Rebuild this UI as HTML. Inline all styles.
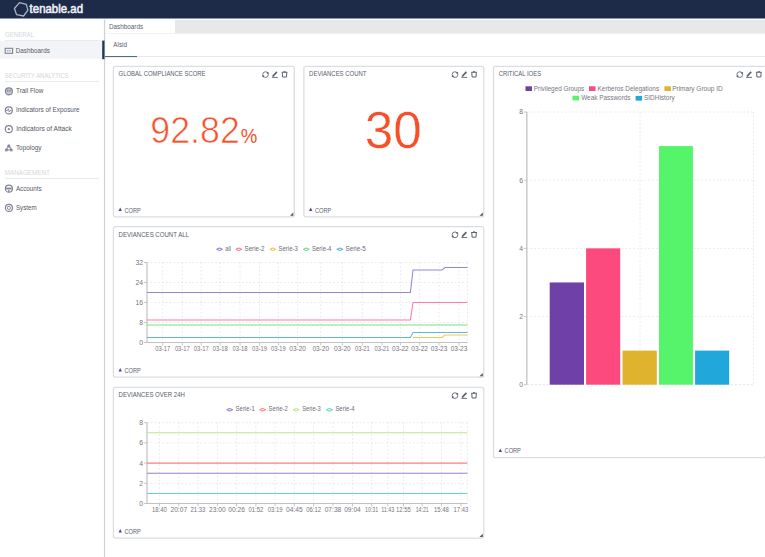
<!DOCTYPE html>
<html><head><meta charset="utf-8"><title>Dashboards</title>
<style>
html,body{margin:0;padding:0;background:#fff;width:765px;height:557px;overflow:hidden;}
svg{display:block;font-family:"Liberation Sans", sans-serif;}
</style></head>
<body>
<svg width="765" height="557" viewBox="0 0 765 557">
<rect x="0" y="0" width="765" height="18.5" fill="#1d2a48"/>
<polygon points="19.5,2.6 26.3,4.4 27.9,10.2 23.6,16 16.6,14.7 14.4,8.5" fill="none" stroke="#a9b3c6" stroke-width="1.3" stroke-linejoin="round"/>
<text x="29.6" y="13.1" font-size="11.9" fill="#eef0f5" text-anchor="start" font-weight="normal" textLength="53.4" lengthAdjust="spacingAndGlyphs" stroke="#eef0f5" stroke-width="0.55">tenable.ad</text>
<rect x="103.9" y="19.6" width="1.25" height="540" fill="#d2d2d4"/>
<text x="5" y="36.8" font-size="6.9" fill="#d6d6dc" text-anchor="start" font-weight="normal" textLength="29" lengthAdjust="spacingAndGlyphs">GENERAL</text>
<rect x="5" y="40" width="95" height="0.8" fill="#e6e6ea"/>
<rect x="0" y="41" width="102.5" height="17.8" fill="#f3f4f7"/>
<rect x="102.2" y="40.6" width="2.3" height="18.6" fill="#1c3a52"/>
<rect x="5.2" y="48.3" width="7.4" height="5" fill="none" stroke="#7f8393" stroke-width="1.1"/>
<rect x="7" y="50.3" width="1.5" height="1" fill="#7f8393"/><rect x="9.3" y="50.3" width="1.5" height="1" fill="#7f8393"/>
<text x="15.8" y="52.8" font-size="7.35" fill="#555866" text-anchor="start" font-weight="normal" textLength="34" lengthAdjust="spacingAndGlyphs">Dashboards</text>
<text x="4.8" y="78" font-size="6.9" fill="#d6d6dc" text-anchor="start" font-weight="normal" textLength="64" lengthAdjust="spacingAndGlyphs">SECURITY ANALYTICS</text>
<rect x="5" y="81" width="94" height="0.8" fill="#e6e6ea"/>
<circle cx="8.9" cy="91.3" r="3.5" fill="none" stroke="#7f8393" stroke-width="1.2"/><circle cx="8.9" cy="91.3" r="3" fill="#7f8393" opacity="0.45"/><rect x="7.2" y="89.6" width="1.2" height="2" fill="#7f8393"/><rect x="9.4" y="89.6" width="1.2" height="2" fill="#7f8393"/>
<text x="16" y="93.3" font-size="7.35" fill="#555866" text-anchor="start" font-weight="normal" textLength="27.3" lengthAdjust="spacingAndGlyphs">Trail Flow</text>
<circle cx="8.8" cy="110.4" r="3.5" fill="none" stroke="#7f8393" stroke-width="1.2"/><polyline points="6,110.6 7.5,110.6 8.3,108.8 9.3,112 10,110.6 11.6,110.6" fill="none" stroke="#7f8393" stroke-width="0.9"/>
<text x="16" y="112" font-size="7.35" fill="#555866" text-anchor="start" font-weight="normal" textLength="63.6" lengthAdjust="spacingAndGlyphs">Indicators of Exposure</text>
<circle cx="8.8" cy="129.2" r="3.5" fill="none" stroke="#7f8393" stroke-width="1.2"/><circle cx="8.8" cy="129.2" r="1.1" fill="#7f8393"/>
<text x="16.2" y="130.9" font-size="7.35" fill="#555866" text-anchor="start" font-weight="normal" textLength="55.6" lengthAdjust="spacingAndGlyphs">Indicators of Attack</text>
<polygon points="8.8,145.6 11.4,149.9 6.2,149.9" fill="none" stroke="#7f8393" stroke-width="1.3" stroke-linejoin="round" opacity="0.8"/>
<g opacity="0.8"><circle cx="8.8" cy="145.8" r="1.6" fill="#7f8393"/><circle cx="6.3" cy="150" r="1.6" fill="#7f8393"/><circle cx="11.3" cy="150" r="1.6" fill="#7f8393"/></g>
<text x="15.9" y="150.2" font-size="7.35" fill="#555866" text-anchor="start" font-weight="normal" textLength="25.6" lengthAdjust="spacingAndGlyphs">Topology</text>
<text x="4.8" y="175" font-size="6.9" fill="#d6d6dc" text-anchor="start" font-weight="normal" textLength="45" lengthAdjust="spacingAndGlyphs">MANAGEMENT</text>
<rect x="5" y="178" width="94" height="0.8" fill="#e6e6ea"/>
<circle cx="8.9" cy="188.7" r="3.5" fill="none" stroke="#7f8393" stroke-width="1.2"/><rect x="6.2" y="187.6" width="5.4" height="1.8" fill="#7f8393"/><circle cx="8.9" cy="190.8" r="0.9" fill="#7f8393"/>
<text x="15.9" y="190.9" font-size="7.35" fill="#555866" text-anchor="start" font-weight="normal" textLength="25.8" lengthAdjust="spacingAndGlyphs">Accounts</text>
<circle cx="8.9" cy="207.9" r="3.5" fill="none" stroke="#7f8393" stroke-width="1.2"/><circle cx="8.9" cy="207.9" r="1.6" fill="none" stroke="#7f8393" stroke-width="0.9"/>
<text x="15.9" y="209.9" font-size="7.35" fill="#555866" text-anchor="start" font-weight="normal" textLength="20.7" lengthAdjust="spacingAndGlyphs">System</text>
<rect x="175" y="19.8" width="590" height="13.6" fill="#e8e8e9"/>
<rect x="105" y="33" width="660" height="0.6" fill="#ececee"/>
<text x="108.9" y="28.8" font-size="6.8" fill="#5d6070" text-anchor="start" font-weight="normal" textLength="34.2" lengthAdjust="spacingAndGlyphs">Dashboards</text>
<text x="113.3" y="46.9" font-size="6.9" fill="#5d6070" text-anchor="start" font-weight="normal" textLength="13.7" lengthAdjust="spacingAndGlyphs">Alsid</text>
<rect x="137" y="56.1" width="628" height="0.8" fill="#e4e4e8"/>
<rect x="105" y="56" width="32" height="1.1" fill="#4f6f86"/>
<rect x="113.4" y="66.4" width="180.9" height="150.4" rx="2" fill="#fff" stroke="#dcdde2" stroke-width="1.3"/>
<text x="118.6" y="76.3" font-size="7.4" fill="#585c6e" text-anchor="start" font-weight="normal" textLength="86.9" lengthAdjust="spacingAndGlyphs">GLOBAL COMPLIANCE SCORE</text>
<circle cx="265.5" cy="74.6" r="2.85" fill="none" stroke="#5d6172" stroke-width="0.95" opacity="0.9"/>
<circle cx="267.8" cy="72.89999999999999" r="0.95" fill="#5d6172"/>
<circle cx="263.2" cy="76.3" r="0.95" fill="#5d6172"/>
<line x1="272.6" y1="76.5" x2="276.9" y2="71.9" stroke="#5d6172" stroke-width="1.7"/>
<rect x="271.9" y="76.9" width="5.8" height="0.9" fill="#5d6172"/>
<rect x="281.6" y="71.8" width="5.9" height="1.0" fill="#5d6172"/>
<rect x="283.5" y="71.2" width="2.1" height="0.8" fill="#5d6172"/>
<path d="M282.3,72.8 L282.6,77.0 L286.5,77.0 L286.8,72.8" fill="none" stroke="#5d6172" stroke-width="1.0"/>
<polygon points="120.2,207.6 121.9,211.1 118.5,211.1" fill="#5b3aa8"/>
<text x="124.5" y="212.5" font-size="6.9" fill="#5d6070" text-anchor="start" font-weight="normal" textLength="16.3" lengthAdjust="spacingAndGlyphs">CORP</text>
<polygon points="293.3,212.5 293.3,215.8 290.0,215.8" fill="#555"/>
<rect x="303.9" y="66.4" width="179.9" height="150.4" rx="2" fill="#fff" stroke="#dcdde2" stroke-width="1.3"/>
<text x="309.1" y="76.3" font-size="7.4" fill="#585c6e" text-anchor="start" font-weight="normal" textLength="57.4" lengthAdjust="spacingAndGlyphs">DEVIANCES COUNT</text>
<circle cx="455.0" cy="74.6" r="2.85" fill="none" stroke="#5d6172" stroke-width="0.95" opacity="0.9"/>
<circle cx="457.3" cy="72.89999999999999" r="0.95" fill="#5d6172"/>
<circle cx="452.7" cy="76.3" r="0.95" fill="#5d6172"/>
<line x1="462.1" y1="76.5" x2="466.4" y2="71.9" stroke="#5d6172" stroke-width="1.7"/>
<rect x="461.4" y="76.9" width="5.8" height="0.9" fill="#5d6172"/>
<rect x="471.1" y="71.8" width="5.9" height="1.0" fill="#5d6172"/>
<rect x="473.0" y="71.2" width="2.1" height="0.8" fill="#5d6172"/>
<path d="M471.8,72.8 L472.1,77.0 L476.0,77.0 L476.3,72.8" fill="none" stroke="#5d6172" stroke-width="1.0"/>
<polygon points="310.7,207.6 312.4,211.1 309.0,211.1" fill="#5b3aa8"/>
<text x="315.0" y="212.5" font-size="6.9" fill="#5d6070" text-anchor="start" font-weight="normal" textLength="16.3" lengthAdjust="spacingAndGlyphs">CORP</text>
<polygon points="482.8,212.5 482.8,215.8 479.5,215.8" fill="#555"/>
<rect x="113.4" y="226.6" width="370.4" height="150.6" rx="2" fill="#fff" stroke="#dcdde2" stroke-width="1.3"/>
<text x="118.6" y="236.5" font-size="7.4" fill="#585c6e" text-anchor="start" font-weight="normal" textLength="70.4" lengthAdjust="spacingAndGlyphs">DEVIANCES COUNT ALL</text>
<circle cx="455.0" cy="234.79999999999998" r="2.85" fill="none" stroke="#5d6172" stroke-width="0.95" opacity="0.9"/>
<circle cx="457.3" cy="233.1" r="0.95" fill="#5d6172"/>
<circle cx="452.7" cy="236.49999999999997" r="0.95" fill="#5d6172"/>
<line x1="462.1" y1="236.7" x2="466.4" y2="232.1" stroke="#5d6172" stroke-width="1.7"/>
<rect x="461.4" y="237.1" width="5.8" height="0.9" fill="#5d6172"/>
<rect x="471.1" y="232.0" width="5.9" height="1.0" fill="#5d6172"/>
<rect x="473.0" y="231.39999999999998" width="2.1" height="0.8" fill="#5d6172"/>
<path d="M471.8,233.0 L472.1,237.2 L476.0,237.2 L476.3,233.0" fill="none" stroke="#5d6172" stroke-width="1.0"/>
<polygon points="120.2,368.0 121.9,371.5 118.5,371.5" fill="#5b3aa8"/>
<text x="124.5" y="372.9" font-size="6.9" fill="#5d6070" text-anchor="start" font-weight="normal" textLength="16.3" lengthAdjust="spacingAndGlyphs">CORP</text>
<polygon points="482.8,372.9 482.8,376.2 479.5,376.2" fill="#555"/>
<rect x="113.4" y="387.4" width="370.4" height="150.69999999999996" rx="2" fill="#fff" stroke="#dcdde2" stroke-width="1.3"/>
<text x="118.6" y="397.3" font-size="7.4" fill="#585c6e" text-anchor="start" font-weight="normal" textLength="66.3" lengthAdjust="spacingAndGlyphs">DEVIANCES OVER 24H</text>
<circle cx="455.0" cy="395.6" r="2.85" fill="none" stroke="#5d6172" stroke-width="0.95" opacity="0.9"/>
<circle cx="457.3" cy="393.90000000000003" r="0.95" fill="#5d6172"/>
<circle cx="452.7" cy="397.3" r="0.95" fill="#5d6172"/>
<line x1="462.1" y1="397.5" x2="466.4" y2="392.9" stroke="#5d6172" stroke-width="1.7"/>
<rect x="461.4" y="397.9" width="5.8" height="0.9" fill="#5d6172"/>
<rect x="471.1" y="392.8" width="5.9" height="1.0" fill="#5d6172"/>
<rect x="473.0" y="392.2" width="2.1" height="0.8" fill="#5d6172"/>
<path d="M471.8,393.8 L472.1,398.0 L476.0,398.0 L476.3,393.8" fill="none" stroke="#5d6172" stroke-width="1.0"/>
<polygon points="120.2,528.9 121.9,532.4 118.5,532.4" fill="#5b3aa8"/>
<text x="124.5" y="533.8" font-size="6.9" fill="#5d6070" text-anchor="start" font-weight="normal" textLength="16.3" lengthAdjust="spacingAndGlyphs">CORP</text>
<polygon points="482.8,533.8 482.8,537.0999999999999 479.5,537.0999999999999" fill="#555"/>
<rect x="493.5" y="66.4" width="281.0999999999999" height="391.2" rx="2" fill="#fff" stroke="#dcdde2" stroke-width="1.3"/>
<text x="498.70000000000005" y="76.3" font-size="7.4" fill="#585c6e" text-anchor="start" font-weight="normal" textLength="42.4" lengthAdjust="spacingAndGlyphs">CRITICAL IOES</text>
<circle cx="739.8" cy="74.6" r="2.85" fill="none" stroke="#5d6172" stroke-width="0.95" opacity="0.9"/>
<circle cx="742.0999999999999" cy="72.89999999999999" r="0.95" fill="#5d6172"/>
<circle cx="737.5" cy="76.3" r="0.95" fill="#5d6172"/>
<line x1="746.9" y1="76.5" x2="751.1999999999999" y2="71.9" stroke="#5d6172" stroke-width="1.7"/>
<rect x="746.1999999999999" y="76.9" width="5.8" height="0.9" fill="#5d6172"/>
<rect x="755.9" y="71.8" width="5.9" height="1.0" fill="#5d6172"/>
<rect x="757.8" y="71.2" width="2.1" height="0.8" fill="#5d6172"/>
<path d="M756.5999999999999,72.8 L756.9,77.0 L760.8,77.0 L761.0999999999999,72.8" fill="none" stroke="#5d6172" stroke-width="1.0"/>
<polygon points="500.3,448.40000000000003 502.0,451.90000000000003 498.6,451.90000000000003" fill="#5b3aa8"/>
<text x="504.6" y="453.3" font-size="6.9" fill="#5d6070" text-anchor="start" font-weight="normal" textLength="16.3" lengthAdjust="spacingAndGlyphs">CORP</text>
<polygon points="767.5999999999999,453.3 767.5999999999999,456.6 764.3,456.6" fill="#555"/>
<text x="150.3" y="143.4" font-size="36.6" fill="#f6502a" text-anchor="start" font-weight="normal" textLength="89.5" lengthAdjust="spacingAndGlyphs" stroke="#fff" stroke-width="0.7">92.82</text>
<text x="240.8" y="143.4" font-size="20" fill="#f6502a" text-anchor="start" font-weight="normal" textLength="16.6" lengthAdjust="spacingAndGlyphs">%</text>
<text x="364.8" y="147.8" font-size="51" fill="#f6502a" text-anchor="start" font-weight="normal" textLength="57" lengthAdjust="spacingAndGlyphs" stroke="#fff" stroke-width="0.4">30</text>
<line x1="147" y1="262.5" x2="467.5" y2="262.5" stroke="#e2e2e2" stroke-width="0.8" stroke-dasharray="1.6,2.2"/>
<line x1="143.8" y1="262.5" x2="147" y2="262.5" stroke="#c2c2c2" stroke-width="0.9"/>
<text x="143" y="264.9" font-size="6.8" fill="#76767e" text-anchor="end" font-weight="normal">32</text>
<line x1="147" y1="282.5" x2="467.5" y2="282.5" stroke="#e2e2e2" stroke-width="0.8" stroke-dasharray="1.6,2.2"/>
<line x1="143.8" y1="282.5" x2="147" y2="282.5" stroke="#c2c2c2" stroke-width="0.9"/>
<text x="143" y="284.9" font-size="6.8" fill="#76767e" text-anchor="end" font-weight="normal">24</text>
<line x1="147" y1="302.5" x2="467.5" y2="302.5" stroke="#e2e2e2" stroke-width="0.8" stroke-dasharray="1.6,2.2"/>
<line x1="143.8" y1="302.5" x2="147" y2="302.5" stroke="#c2c2c2" stroke-width="0.9"/>
<text x="143" y="304.9" font-size="6.8" fill="#76767e" text-anchor="end" font-weight="normal">16</text>
<line x1="147" y1="322.5" x2="467.5" y2="322.5" stroke="#e2e2e2" stroke-width="0.8" stroke-dasharray="1.6,2.2"/>
<line x1="143.8" y1="322.5" x2="147" y2="322.5" stroke="#c2c2c2" stroke-width="0.9"/>
<text x="143" y="324.9" font-size="6.8" fill="#76767e" text-anchor="end" font-weight="normal">8</text>
<line x1="143.8" y1="342.5" x2="147" y2="342.5" stroke="#c2c2c2" stroke-width="0.9"/>
<text x="143" y="344.9" font-size="6.8" fill="#76767e" text-anchor="end" font-weight="normal">0</text>
<line x1="162.7" y1="262.5" x2="162.7" y2="342.5" stroke="#e2e2e2" stroke-width="0.8" stroke-dasharray="1.6,2.2"/>
<line x1="162.7" y1="342.5" x2="162.7" y2="345.5" stroke="#c2c2c2" stroke-width="0.9"/>
<line x1="182.3" y1="262.5" x2="182.3" y2="342.5" stroke="#e2e2e2" stroke-width="0.8" stroke-dasharray="1.6,2.2"/>
<line x1="182.3" y1="342.5" x2="182.3" y2="345.5" stroke="#c2c2c2" stroke-width="0.9"/>
<line x1="201.2" y1="262.5" x2="201.2" y2="342.5" stroke="#e2e2e2" stroke-width="0.8" stroke-dasharray="1.6,2.2"/>
<line x1="201.2" y1="342.5" x2="201.2" y2="345.5" stroke="#c2c2c2" stroke-width="0.9"/>
<line x1="220.2" y1="262.5" x2="220.2" y2="342.5" stroke="#e2e2e2" stroke-width="0.8" stroke-dasharray="1.6,2.2"/>
<line x1="220.2" y1="342.5" x2="220.2" y2="345.5" stroke="#c2c2c2" stroke-width="0.9"/>
<line x1="240" y1="262.5" x2="240" y2="342.5" stroke="#e2e2e2" stroke-width="0.8" stroke-dasharray="1.6,2.2"/>
<line x1="240" y1="342.5" x2="240" y2="345.5" stroke="#c2c2c2" stroke-width="0.9"/>
<line x1="259.5" y1="262.5" x2="259.5" y2="342.5" stroke="#e2e2e2" stroke-width="0.8" stroke-dasharray="1.6,2.2"/>
<line x1="259.5" y1="342.5" x2="259.5" y2="345.5" stroke="#c2c2c2" stroke-width="0.9"/>
<line x1="278.4" y1="262.5" x2="278.4" y2="342.5" stroke="#e2e2e2" stroke-width="0.8" stroke-dasharray="1.6,2.2"/>
<line x1="278.4" y1="342.5" x2="278.4" y2="345.5" stroke="#c2c2c2" stroke-width="0.9"/>
<line x1="297.6" y1="262.5" x2="297.6" y2="342.5" stroke="#e2e2e2" stroke-width="0.8" stroke-dasharray="1.6,2.2"/>
<line x1="297.6" y1="342.5" x2="297.6" y2="345.5" stroke="#c2c2c2" stroke-width="0.9"/>
<line x1="320.7" y1="262.5" x2="320.7" y2="342.5" stroke="#e2e2e2" stroke-width="0.8" stroke-dasharray="1.6,2.2"/>
<line x1="320.7" y1="342.5" x2="320.7" y2="345.5" stroke="#c2c2c2" stroke-width="0.9"/>
<line x1="342.4" y1="262.5" x2="342.4" y2="342.5" stroke="#e2e2e2" stroke-width="0.8" stroke-dasharray="1.6,2.2"/>
<line x1="342.4" y1="342.5" x2="342.4" y2="345.5" stroke="#c2c2c2" stroke-width="0.9"/>
<line x1="362.4" y1="262.5" x2="362.4" y2="342.5" stroke="#e2e2e2" stroke-width="0.8" stroke-dasharray="1.6,2.2"/>
<line x1="362.4" y1="342.5" x2="362.4" y2="345.5" stroke="#c2c2c2" stroke-width="0.9"/>
<line x1="381.9" y1="262.5" x2="381.9" y2="342.5" stroke="#e2e2e2" stroke-width="0.8" stroke-dasharray="1.6,2.2"/>
<line x1="381.9" y1="342.5" x2="381.9" y2="345.5" stroke="#c2c2c2" stroke-width="0.9"/>
<line x1="400.4" y1="262.5" x2="400.4" y2="342.5" stroke="#e2e2e2" stroke-width="0.8" stroke-dasharray="1.6,2.2"/>
<line x1="400.4" y1="342.5" x2="400.4" y2="345.5" stroke="#c2c2c2" stroke-width="0.9"/>
<line x1="419.6" y1="262.5" x2="419.6" y2="342.5" stroke="#e2e2e2" stroke-width="0.8" stroke-dasharray="1.6,2.2"/>
<line x1="419.6" y1="342.5" x2="419.6" y2="345.5" stroke="#c2c2c2" stroke-width="0.9"/>
<line x1="439" y1="262.5" x2="439" y2="342.5" stroke="#e2e2e2" stroke-width="0.8" stroke-dasharray="1.6,2.2"/>
<line x1="439" y1="342.5" x2="439" y2="345.5" stroke="#c2c2c2" stroke-width="0.9"/>
<line x1="459" y1="262.5" x2="459" y2="342.5" stroke="#e2e2e2" stroke-width="0.8" stroke-dasharray="1.6,2.2"/>
<line x1="459" y1="342.5" x2="459" y2="345.5" stroke="#c2c2c2" stroke-width="0.9"/>
<line x1="467.5" y1="262.5" x2="467.5" y2="342.5" stroke="#e2e2e2" stroke-width="0.8" stroke-dasharray="1.6,2.2"/>
<line x1="147" y1="262.0" x2="147" y2="343.0" stroke="#c2c2c2" stroke-width="1.2"/>
<line x1="147" y1="342.5" x2="467.5" y2="342.5" stroke="#c2c2c2" stroke-width="1.1"/>
<text x="162.7" y="350.6" font-size="7.0" fill="#76767e" text-anchor="middle" font-weight="normal" textLength="14.85" lengthAdjust="spacingAndGlyphs">03-17</text>
<text x="182.3" y="350.6" font-size="7.0" fill="#76767e" text-anchor="middle" font-weight="normal" textLength="14.85" lengthAdjust="spacingAndGlyphs">03-17</text>
<text x="201.2" y="350.6" font-size="7.0" fill="#76767e" text-anchor="middle" font-weight="normal" textLength="14.85" lengthAdjust="spacingAndGlyphs">03-17</text>
<text x="220.2" y="350.6" font-size="7.0" fill="#76767e" text-anchor="middle" font-weight="normal" textLength="14.85" lengthAdjust="spacingAndGlyphs">03-18</text>
<text x="240" y="350.6" font-size="7.0" fill="#76767e" text-anchor="middle" font-weight="normal" textLength="14.85" lengthAdjust="spacingAndGlyphs">03-18</text>
<text x="259.5" y="350.6" font-size="7.0" fill="#76767e" text-anchor="middle" font-weight="normal" textLength="14.85" lengthAdjust="spacingAndGlyphs">03-19</text>
<text x="278.4" y="350.6" font-size="7.0" fill="#76767e" text-anchor="middle" font-weight="normal" textLength="14.85" lengthAdjust="spacingAndGlyphs">03-19</text>
<text x="297.6" y="350.6" font-size="7.0" fill="#76767e" text-anchor="middle" font-weight="normal" textLength="16.6" lengthAdjust="spacingAndGlyphs">03-20</text>
<text x="320.7" y="350.6" font-size="7.0" fill="#76767e" text-anchor="middle" font-weight="normal" textLength="16.6" lengthAdjust="spacingAndGlyphs">03-20</text>
<text x="342.4" y="350.6" font-size="7.0" fill="#76767e" text-anchor="middle" font-weight="normal" textLength="16.6" lengthAdjust="spacingAndGlyphs">03-20</text>
<text x="362.4" y="350.6" font-size="7.0" fill="#76767e" text-anchor="middle" font-weight="normal" textLength="14.85" lengthAdjust="spacingAndGlyphs">03-21</text>
<text x="381.9" y="350.6" font-size="7.0" fill="#76767e" text-anchor="middle" font-weight="normal" textLength="14.85" lengthAdjust="spacingAndGlyphs">03-21</text>
<text x="400.4" y="350.6" font-size="7.0" fill="#76767e" text-anchor="middle" font-weight="normal" textLength="16.6" lengthAdjust="spacingAndGlyphs">03-22</text>
<text x="419.6" y="350.6" font-size="7.0" fill="#76767e" text-anchor="middle" font-weight="normal" textLength="16.6" lengthAdjust="spacingAndGlyphs">03-22</text>
<text x="439" y="350.6" font-size="7.0" fill="#76767e" text-anchor="middle" font-weight="normal" textLength="16.6" lengthAdjust="spacingAndGlyphs">03-23</text>
<text x="459" y="350.6" font-size="7.0" fill="#76767e" text-anchor="middle" font-weight="normal" textLength="16.6" lengthAdjust="spacingAndGlyphs">03-23</text>
<polyline points="147,325.0 467.5,325.0" fill="none" stroke="#74e48c" stroke-width="1.05"/>
<polyline points="413,337.5 442,337.5 445,335.0 467.5,335.0" fill="none" stroke="#f5c35e" stroke-width="1.05"/>
<polyline points="147,337.5 410.4,337.5 413,332.5 467.5,332.5" fill="none" stroke="#5cbad6" stroke-width="1.05"/>
<polyline points="147,320.0 410.4,320.0 413,302.5 467.5,302.5" fill="none" stroke="#ff7aa8" stroke-width="1.05"/>
<polyline points="147,292.5 410.4,292.5 413,270.0 442,270.0 445,267.5 467.5,267.5" fill="none" stroke="#9585d6" stroke-width="1.05"/>
<line x1="216.3" y1="249.3" x2="222.9" y2="249.3" stroke="#9585d6" stroke-width="1.2"/>
<ellipse cx="219.5" cy="249.3" rx="1.9" ry="1.15" fill="#fff" stroke="#9585d6" stroke-width="1.1"/>
<text x="225.2" y="250.9" font-size="7" fill="#6c6c78" text-anchor="start" font-weight="normal" textLength="5.8" lengthAdjust="spacingAndGlyphs">all</text>
<line x1="235.6" y1="249.3" x2="242.2" y2="249.3" stroke="#ff7aa8" stroke-width="1.2"/>
<ellipse cx="238.79999999999998" cy="249.3" rx="1.9" ry="1.15" fill="#fff" stroke="#ff7aa8" stroke-width="1.1"/>
<text x="244.5" y="250.9" font-size="7" fill="#6c6c78" text-anchor="start" font-weight="normal" textLength="20" lengthAdjust="spacingAndGlyphs">Serie-2</text>
<line x1="269.6" y1="249.3" x2="276.20000000000005" y2="249.3" stroke="#f5c35e" stroke-width="1.2"/>
<ellipse cx="272.8" cy="249.3" rx="1.9" ry="1.15" fill="#fff" stroke="#f5c35e" stroke-width="1.1"/>
<text x="278.5" y="250.9" font-size="7" fill="#6c6c78" text-anchor="start" font-weight="normal" textLength="19.4" lengthAdjust="spacingAndGlyphs">Serie-3</text>
<line x1="303.1" y1="249.3" x2="309.70000000000005" y2="249.3" stroke="#74e48c" stroke-width="1.2"/>
<ellipse cx="306.3" cy="249.3" rx="1.9" ry="1.15" fill="#fff" stroke="#74e48c" stroke-width="1.1"/>
<text x="312" y="250.9" font-size="7" fill="#6c6c78" text-anchor="start" font-weight="normal" textLength="19.3" lengthAdjust="spacingAndGlyphs">Serie-4</text>
<line x1="336.6" y1="249.3" x2="343.20000000000005" y2="249.3" stroke="#5cbad6" stroke-width="1.2"/>
<ellipse cx="339.8" cy="249.3" rx="1.9" ry="1.15" fill="#fff" stroke="#5cbad6" stroke-width="1.1"/>
<text x="345.5" y="250.9" font-size="7" fill="#6c6c78" text-anchor="start" font-weight="normal" textLength="20.4" lengthAdjust="spacingAndGlyphs">Serie-5</text>
<line x1="147" y1="422.7" x2="467.3" y2="422.7" stroke="#e2e2e2" stroke-width="0.8" stroke-dasharray="1.6,2.2"/>
<line x1="143.8" y1="422.7" x2="147" y2="422.7" stroke="#c2c2c2" stroke-width="0.9"/>
<text x="143" y="425.09999999999997" font-size="6.8" fill="#76767e" text-anchor="end" font-weight="normal">8</text>
<line x1="147" y1="442.9" x2="467.3" y2="442.9" stroke="#e2e2e2" stroke-width="0.8" stroke-dasharray="1.6,2.2"/>
<line x1="143.8" y1="442.9" x2="147" y2="442.9" stroke="#c2c2c2" stroke-width="0.9"/>
<text x="143" y="445.29999999999995" font-size="6.8" fill="#76767e" text-anchor="end" font-weight="normal">6</text>
<line x1="147" y1="463.1" x2="467.3" y2="463.1" stroke="#e2e2e2" stroke-width="0.8" stroke-dasharray="1.6,2.2"/>
<line x1="143.8" y1="463.1" x2="147" y2="463.1" stroke="#c2c2c2" stroke-width="0.9"/>
<text x="143" y="465.5" font-size="6.8" fill="#76767e" text-anchor="end" font-weight="normal">4</text>
<line x1="147" y1="483.3" x2="467.3" y2="483.3" stroke="#e2e2e2" stroke-width="0.8" stroke-dasharray="1.6,2.2"/>
<line x1="143.8" y1="483.3" x2="147" y2="483.3" stroke="#c2c2c2" stroke-width="0.9"/>
<text x="143" y="485.7" font-size="6.8" fill="#76767e" text-anchor="end" font-weight="normal">2</text>
<line x1="143.8" y1="503.5" x2="147" y2="503.5" stroke="#c2c2c2" stroke-width="0.9"/>
<text x="143" y="505.9" font-size="6.8" fill="#76767e" text-anchor="end" font-weight="normal">0</text>
<line x1="159.4" y1="422.7" x2="159.4" y2="503.5" stroke="#e2e2e2" stroke-width="0.8" stroke-dasharray="1.6,2.2"/>
<line x1="159.4" y1="503.5" x2="159.4" y2="506.5" stroke="#c2c2c2" stroke-width="0.9"/>
<line x1="178.8" y1="422.7" x2="178.8" y2="503.5" stroke="#e2e2e2" stroke-width="0.8" stroke-dasharray="1.6,2.2"/>
<line x1="178.8" y1="503.5" x2="178.8" y2="506.5" stroke="#c2c2c2" stroke-width="0.9"/>
<line x1="198" y1="422.7" x2="198" y2="503.5" stroke="#e2e2e2" stroke-width="0.8" stroke-dasharray="1.6,2.2"/>
<line x1="198" y1="503.5" x2="198" y2="506.5" stroke="#c2c2c2" stroke-width="0.9"/>
<line x1="217.4" y1="422.7" x2="217.4" y2="503.5" stroke="#e2e2e2" stroke-width="0.8" stroke-dasharray="1.6,2.2"/>
<line x1="217.4" y1="503.5" x2="217.4" y2="506.5" stroke="#c2c2c2" stroke-width="0.9"/>
<line x1="236.6" y1="422.7" x2="236.6" y2="503.5" stroke="#e2e2e2" stroke-width="0.8" stroke-dasharray="1.6,2.2"/>
<line x1="236.6" y1="503.5" x2="236.6" y2="506.5" stroke="#c2c2c2" stroke-width="0.9"/>
<line x1="255.9" y1="422.7" x2="255.9" y2="503.5" stroke="#e2e2e2" stroke-width="0.8" stroke-dasharray="1.6,2.2"/>
<line x1="255.9" y1="503.5" x2="255.9" y2="506.5" stroke="#c2c2c2" stroke-width="0.9"/>
<line x1="275.1" y1="422.7" x2="275.1" y2="503.5" stroke="#e2e2e2" stroke-width="0.8" stroke-dasharray="1.6,2.2"/>
<line x1="275.1" y1="503.5" x2="275.1" y2="506.5" stroke="#c2c2c2" stroke-width="0.9"/>
<line x1="294.3" y1="422.7" x2="294.3" y2="503.5" stroke="#e2e2e2" stroke-width="0.8" stroke-dasharray="1.6,2.2"/>
<line x1="294.3" y1="503.5" x2="294.3" y2="506.5" stroke="#c2c2c2" stroke-width="0.9"/>
<line x1="313.6" y1="422.7" x2="313.6" y2="503.5" stroke="#e2e2e2" stroke-width="0.8" stroke-dasharray="1.6,2.2"/>
<line x1="313.6" y1="503.5" x2="313.6" y2="506.5" stroke="#c2c2c2" stroke-width="0.9"/>
<line x1="333" y1="422.7" x2="333" y2="503.5" stroke="#e2e2e2" stroke-width="0.8" stroke-dasharray="1.6,2.2"/>
<line x1="333" y1="503.5" x2="333" y2="506.5" stroke="#c2c2c2" stroke-width="0.9"/>
<line x1="352.5" y1="422.7" x2="352.5" y2="503.5" stroke="#e2e2e2" stroke-width="0.8" stroke-dasharray="1.6,2.2"/>
<line x1="352.5" y1="503.5" x2="352.5" y2="506.5" stroke="#c2c2c2" stroke-width="0.9"/>
<line x1="371.6" y1="422.7" x2="371.6" y2="503.5" stroke="#e2e2e2" stroke-width="0.8" stroke-dasharray="1.6,2.2"/>
<line x1="371.6" y1="503.5" x2="371.6" y2="506.5" stroke="#c2c2c2" stroke-width="0.9"/>
<line x1="387.8" y1="422.7" x2="387.8" y2="503.5" stroke="#e2e2e2" stroke-width="0.8" stroke-dasharray="1.6,2.2"/>
<line x1="387.8" y1="503.5" x2="387.8" y2="506.5" stroke="#c2c2c2" stroke-width="0.9"/>
<line x1="403.5" y1="422.7" x2="403.5" y2="503.5" stroke="#e2e2e2" stroke-width="0.8" stroke-dasharray="1.6,2.2"/>
<line x1="403.5" y1="503.5" x2="403.5" y2="506.5" stroke="#c2c2c2" stroke-width="0.9"/>
<line x1="422.2" y1="422.7" x2="422.2" y2="503.5" stroke="#e2e2e2" stroke-width="0.8" stroke-dasharray="1.6,2.2"/>
<line x1="422.2" y1="503.5" x2="422.2" y2="506.5" stroke="#c2c2c2" stroke-width="0.9"/>
<line x1="441.5" y1="422.7" x2="441.5" y2="503.5" stroke="#e2e2e2" stroke-width="0.8" stroke-dasharray="1.6,2.2"/>
<line x1="441.5" y1="503.5" x2="441.5" y2="506.5" stroke="#c2c2c2" stroke-width="0.9"/>
<line x1="461" y1="422.7" x2="461" y2="503.5" stroke="#e2e2e2" stroke-width="0.8" stroke-dasharray="1.6,2.2"/>
<line x1="461" y1="503.5" x2="461" y2="506.5" stroke="#c2c2c2" stroke-width="0.9"/>
<line x1="467.3" y1="422.7" x2="467.3" y2="503.5" stroke="#e2e2e2" stroke-width="0.8" stroke-dasharray="1.6,2.2"/>
<line x1="147" y1="422.2" x2="147" y2="504.0" stroke="#c2c2c2" stroke-width="1.2"/>
<line x1="147" y1="503.5" x2="467.3" y2="503.5" stroke="#c2c2c2" stroke-width="1.1"/>
<text x="159.4" y="511.6" font-size="7.0" fill="#76767e" text-anchor="middle" font-weight="normal" textLength="14.85" lengthAdjust="spacingAndGlyphs">18:40</text>
<text x="178.8" y="511.6" font-size="7.0" fill="#76767e" text-anchor="middle" font-weight="normal" textLength="16.6" lengthAdjust="spacingAndGlyphs">20:07</text>
<text x="198" y="511.6" font-size="7.0" fill="#76767e" text-anchor="middle" font-weight="normal" textLength="14.85" lengthAdjust="spacingAndGlyphs">21:33</text>
<text x="217.4" y="511.6" font-size="7.0" fill="#76767e" text-anchor="middle" font-weight="normal" textLength="16.6" lengthAdjust="spacingAndGlyphs">23:00</text>
<text x="236.6" y="511.6" font-size="7.0" fill="#76767e" text-anchor="middle" font-weight="normal" textLength="16.6" lengthAdjust="spacingAndGlyphs">00:26</text>
<text x="255.9" y="511.6" font-size="7.0" fill="#76767e" text-anchor="middle" font-weight="normal" textLength="14.85" lengthAdjust="spacingAndGlyphs">01:52</text>
<text x="275.1" y="511.6" font-size="7.0" fill="#76767e" text-anchor="middle" font-weight="normal" textLength="14.85" lengthAdjust="spacingAndGlyphs">03:19</text>
<text x="294.3" y="511.6" font-size="7.0" fill="#76767e" text-anchor="middle" font-weight="normal" textLength="16.6" lengthAdjust="spacingAndGlyphs">04:45</text>
<text x="313.6" y="511.6" font-size="7.0" fill="#76767e" text-anchor="middle" font-weight="normal" textLength="14.85" lengthAdjust="spacingAndGlyphs">06:12</text>
<text x="333" y="511.6" font-size="7.0" fill="#76767e" text-anchor="middle" font-weight="normal" textLength="16.6" lengthAdjust="spacingAndGlyphs">07:38</text>
<text x="352.5" y="511.6" font-size="7.0" fill="#76767e" text-anchor="middle" font-weight="normal" textLength="16.6" lengthAdjust="spacingAndGlyphs">09:04</text>
<text x="371.6" y="511.6" font-size="7.0" fill="#76767e" text-anchor="middle" font-weight="normal" textLength="13.1" lengthAdjust="spacingAndGlyphs">10:31</text>
<text x="387.8" y="511.6" font-size="7.0" fill="#76767e" text-anchor="middle" font-weight="normal" textLength="13.1" lengthAdjust="spacingAndGlyphs">11:43</text>
<text x="403.5" y="511.6" font-size="7.0" fill="#76767e" text-anchor="middle" font-weight="normal" textLength="14.85" lengthAdjust="spacingAndGlyphs">12:55</text>
<text x="422.2" y="511.6" font-size="7.0" fill="#76767e" text-anchor="middle" font-weight="normal" textLength="13.1" lengthAdjust="spacingAndGlyphs">14:21</text>
<text x="441.5" y="511.6" font-size="7.0" fill="#76767e" text-anchor="middle" font-weight="normal" textLength="14.85" lengthAdjust="spacingAndGlyphs">15:48</text>
<text x="461" y="511.6" font-size="7.0" fill="#76767e" text-anchor="middle" font-weight="normal" textLength="14.85" lengthAdjust="spacingAndGlyphs">17:43</text>
<polyline points="147,432.79999999999995 467.3,432.79999999999995" fill="none" stroke="#bde88f" stroke-width="1.05"/>
<polyline points="147,463.1 467.3,463.1" fill="none" stroke="#ff7f86" stroke-width="1.05"/>
<polyline points="147,473.2 467.3,473.2" fill="none" stroke="#9a7fd0" stroke-width="1.05"/>
<polyline points="147,493.4 467.3,493.4" fill="none" stroke="#5fd6d0" stroke-width="1.05"/>
<line x1="226.4" y1="409.7" x2="233.0" y2="409.7" stroke="#9a7fd0" stroke-width="1.2"/>
<ellipse cx="229.6" cy="409.7" rx="1.9" ry="1.15" fill="#fff" stroke="#9a7fd0" stroke-width="1.1"/>
<text x="235.6" y="411.3" font-size="7" fill="#6c6c78" text-anchor="start" font-weight="normal" textLength="19.2" lengthAdjust="spacingAndGlyphs">Serie-1</text>
<line x1="259.4" y1="409.7" x2="266.0" y2="409.7" stroke="#ff7f86" stroke-width="1.2"/>
<ellipse cx="262.59999999999997" cy="409.7" rx="1.9" ry="1.15" fill="#fff" stroke="#ff7f86" stroke-width="1.1"/>
<text x="268.6" y="411.3" font-size="7" fill="#6c6c78" text-anchor="start" font-weight="normal" textLength="19.2" lengthAdjust="spacingAndGlyphs">Serie-2</text>
<line x1="293" y1="409.7" x2="299.6" y2="409.7" stroke="#bde88f" stroke-width="1.2"/>
<ellipse cx="296.2" cy="409.7" rx="1.9" ry="1.15" fill="#fff" stroke="#bde88f" stroke-width="1.1"/>
<text x="302.2" y="411.3" font-size="7" fill="#6c6c78" text-anchor="start" font-weight="normal" textLength="18.5" lengthAdjust="spacingAndGlyphs">Serie-3</text>
<line x1="326.2" y1="409.7" x2="332.8" y2="409.7" stroke="#5fd6d0" stroke-width="1.2"/>
<ellipse cx="329.4" cy="409.7" rx="1.9" ry="1.15" fill="#fff" stroke="#5fd6d0" stroke-width="1.1"/>
<text x="335.4" y="411.3" font-size="7" fill="#6c6c78" text-anchor="start" font-weight="normal" textLength="19.2" lengthAdjust="spacingAndGlyphs">Serie-4</text>
<line x1="526.8" y1="112.0" x2="753.5" y2="112.0" stroke="#e2e2e2" stroke-width="0.8" stroke-dasharray="1.6,2.2"/>
<line x1="526.8" y1="180.175" x2="753.5" y2="180.175" stroke="#e2e2e2" stroke-width="0.8" stroke-dasharray="1.6,2.2"/>
<line x1="526.8" y1="248.35" x2="753.5" y2="248.35" stroke="#e2e2e2" stroke-width="0.8" stroke-dasharray="1.6,2.2"/>
<line x1="526.8" y1="316.525" x2="753.5" y2="316.525" stroke="#e2e2e2" stroke-width="0.8" stroke-dasharray="1.6,2.2"/>
<line x1="640" y1="112" x2="640" y2="384.7" stroke="#e2e2e2" stroke-width="0.8" stroke-dasharray="1.6,2.2"/>
<line x1="753.5" y1="112" x2="753.5" y2="384.7" stroke="#e2e2e2" stroke-width="0.8" stroke-dasharray="1.6,2.2"/>
<line x1="526.8" y1="384.7" x2="753.5" y2="384.7" stroke="#e2e2e2" stroke-width="0.9" stroke-dasharray="2,2"/>
<line x1="523.8" y1="112.0" x2="526.8" y2="112.0" stroke="#c2c2c2" stroke-width="0.9"/>
<text x="523.0" y="114.4" font-size="6.8" fill="#76767e" text-anchor="end" font-weight="normal">8</text>
<line x1="523.8" y1="180.175" x2="526.8" y2="180.175" stroke="#c2c2c2" stroke-width="0.9"/>
<text x="523.0" y="182.57500000000002" font-size="6.8" fill="#76767e" text-anchor="end" font-weight="normal">6</text>
<line x1="523.8" y1="248.35" x2="526.8" y2="248.35" stroke="#c2c2c2" stroke-width="0.9"/>
<text x="523.0" y="250.75" font-size="6.8" fill="#76767e" text-anchor="end" font-weight="normal">4</text>
<line x1="523.8" y1="316.525" x2="526.8" y2="316.525" stroke="#c2c2c2" stroke-width="0.9"/>
<text x="523.0" y="318.92499999999995" font-size="6.8" fill="#76767e" text-anchor="end" font-weight="normal">2</text>
<line x1="523.8" y1="384.7" x2="526.8" y2="384.7" stroke="#c2c2c2" stroke-width="0.9"/>
<text x="523.0" y="387.09999999999997" font-size="6.8" fill="#76767e" text-anchor="end" font-weight="normal">0</text>
<line x1="526.8" y1="112" x2="526.8" y2="384.7" stroke="#c2c2c2" stroke-width="1.3"/>
<rect x="549.7" y="282.4375" width="34.299999999999955" height="102.26249999999999" fill="#6e40a8"/>
<rect x="586.1" y="248.35" width="34.10000000000002" height="136.35" fill="#fd4a7e"/>
<rect x="622.5" y="350.6125" width="34.299999999999955" height="34.08749999999998" fill="#e0b32f"/>
<rect x="659" y="146.0875" width="33.89999999999998" height="238.61249999999998" fill="#55f46a"/>
<rect x="695.1" y="350.6125" width="34.10000000000002" height="34.08749999999998" fill="#22a7da"/>
<rect x="525.5" y="86.3" width="6.5" height="4.7" fill="#6e40a8"/>
<text x="533.8" y="90.6" font-size="7.4" fill="#76767e" text-anchor="start" font-weight="normal" textLength="50.5" lengthAdjust="spacingAndGlyphs">Privileged Groups</text>
<rect x="589" y="86.3" width="6.5" height="4.7" fill="#fd4a7e"/>
<text x="597.6" y="90.6" font-size="7.4" fill="#76767e" text-anchor="start" font-weight="normal" textLength="61.5" lengthAdjust="spacingAndGlyphs">Kerberos Delegations</text>
<rect x="664.4" y="86.3" width="6.5" height="4.7" fill="#e0b32f"/>
<text x="672.2" y="90.6" font-size="7.4" fill="#76767e" text-anchor="start" font-weight="normal" textLength="50.5" lengthAdjust="spacingAndGlyphs">Primary Group ID</text>
<rect x="572.5" y="95.7" width="6.5" height="4.7" fill="#55f46a"/>
<text x="581.2" y="100.0" font-size="7.4" fill="#76767e" text-anchor="start" font-weight="normal" textLength="49.4" lengthAdjust="spacingAndGlyphs">Weak Passwords</text>
<rect x="635.6" y="95.9" width="6.5" height="4.7" fill="#22a7da"/>
<text x="644" y="100.2" font-size="7.4" fill="#76767e" text-anchor="start" font-weight="normal" textLength="30.8" lengthAdjust="spacingAndGlyphs">SIDHistory</text>
</svg>
</body></html>
